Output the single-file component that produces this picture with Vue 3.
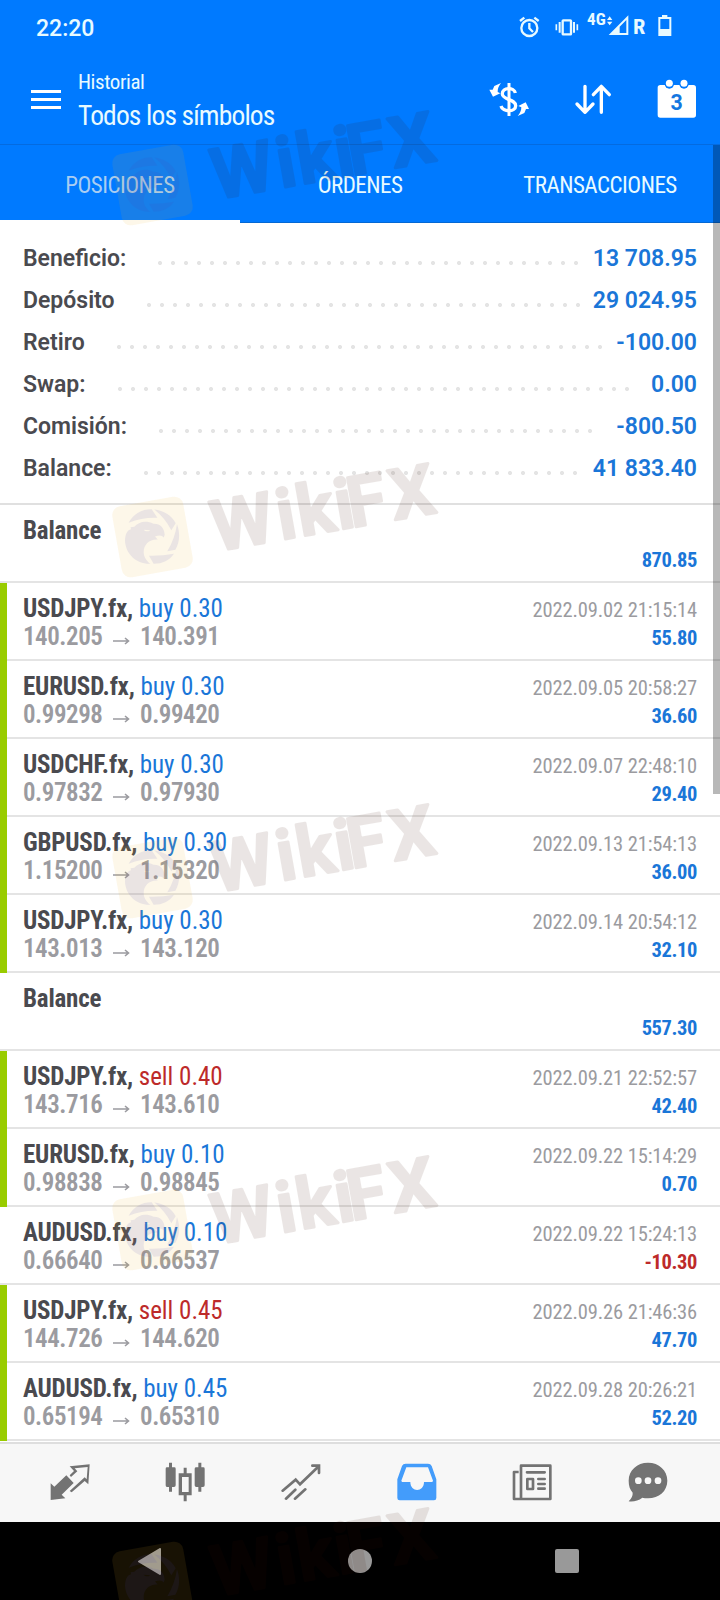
<template>
  <div class="screen">
    <header class="top">
      <div class="status-bar">
        <span class="time">22:20</span>
        <svg class="status-icons" viewBox="470 30 480 90" fill="none" stroke="#e8faff">
          <circle cx="507" cy="84" r="24" stroke-width="7" />
          <path d="M507 69v16l11 11M479 63l13-10M535 63l-13-10" stroke-width="7" />
          <rect x="607" y="61" width="25" height="42" rx="2" stroke-width="7" />
          <path d="M598 66v32M641 66v32" stroke-width="6" />
          <path d="M588 73v18M651 73v18" stroke-width="5" />
          <path d="M740 60l8-11 8 11zM740 65l8 11 8-11z" fill="#e8faff" stroke="none" />
          <path d="M745 105l59-59v59zM778 80v19h20V60z" fill="#e8faff" fill-rule="evenodd" stroke="none" />
          <path d="M905 45h16v6h12v57h-39V51h11zM900 57v30h27V57z" fill="#e8faff" fill-rule="evenodd" stroke="none" />
          <text x="680" y="76" font-size="52" textLength="56" lengthAdjust="spacingAndGlyphs">4G</text>
          <text x="818" y="102" font-size="61" textLength="37" lengthAdjust="spacingAndGlyphs">R</text>
        </svg>
      </div>
      <div class="toolbar">
        <svg class="menu" viewBox="0 0 30 20" fill="#fff">
          <path d="M0 0h30v3H0zM0 8h30v3H0zM0 16h30v3H0z" />
        </svg>
        <div class="titles">
          <div class="subtitle">Historial</div>
          <div class="title">Todos los símbolos</div>
        </div>
        <div class="actions">
          <svg viewBox="388 237 120 120" fill="none" stroke="#fff">
            <path d="M467 279c-3-18-40-18-39 3 1 19 40 15 40 35 0 20-39 20-44 1" stroke-width="10" />
            <path d="M448 249v99" stroke-width="9" />
            <path d="M424 249l-20 9-5 11-10 0 11 21 22-10-8-4c0-11 3-18 10-27z" fill="#fff" stroke="none" />
            <path d="M474 348l20-9 5-12 9 0-10-20-22 11 9 4c0 10-4 18-11 26z" fill="#fff" stroke="none" />
          </svg>
          <svg viewBox="640 237 120 120" fill="none" stroke="#fff" stroke-width="10" stroke-linecap="round" stroke-linejoin="round">
            <path d="M676 259v78M652 312l24 25 24-25M725 337v-78M701 284l24-25 24 25" />
          </svg>
          <svg viewBox="891 237 120 120">
            <rect x="893" y="255" width="115" height="98" rx="8" fill="#fff" />
            <circle cx="928" cy="252" r="14" fill="#007aff" />
            <circle cx="972" cy="252" r="14" fill="#007aff" />
            <circle cx="928" cy="250" r="10.500" fill="#fff" />
            <circle cx="972" cy="250" r="10.500" fill="#fff" />
            <text class="day" x="950" y="331" text-anchor="middle">3</text>
          </svg>
        </div>
      </div>
      <nav class="tabs">
        <div v-for="(tab, i) in tabs" :key="tab" class="tab" :class="{ active: i === 0 }">
          <span>{{ tab }}</span>
        </div>
      </nav>
    </header>

    <section class="summary">
      <div v-for="item in summary" :key="item.label" class="summary-row">
        <span class="summary-label">{{ item.label }}</span>
        <span class="dots" :style="{ width: item.dots * 13 + 'px' }"></span>
        <span class="summary-value">{{ item.value }}</span>
      </div>
    </section>

    <section class="deals">
      <div v-for="(deal, i) in deals" :key="i" class="deal" :class="{ win: deal.symbol && deal.profit > 0 }">
        <div class="line">
          <span v-if="deal.symbol" class="name"><b>{{ deal.symbol }},</b> <span :class="deal.side">{{ deal.side }} {{ deal.volume }}</span></span>
          <span v-else class="name"><b>Balance</b></span>
          <span class="date">{{ deal.date }}</span>
        </div>
        <div class="line">
          <span class="price">
            <template v-if="deal.symbol">
              {{ deal.open }}
              <svg class="arrow" viewBox="0 0 17 8"><path d="M0 4h15.500M12 1l3.500 3-3.500 3" fill="none" stroke="#9b9ba0" stroke-width="1.600" /></svg>
              {{ deal.close }}
            </template>
          </span>
          <span class="amount" :class="{ negative: deal.profit < 0 }">{{ deal.profit }}</span>
        </div>
      </div>
    </section>

    <nav class="bottom-nav">
      <svg viewBox="151 94 120 120" fill="#737373">
        <path d="M153 158l11 10 36-34 22 23-36 35 11 11-44 5z" />
        <path d="M210 107l60-6-4 60-11-10-39 34-6-4 45-41 6 6 3-37-39 4 8 9-19 17-4-5 13-13z" />
      </svg>
      <svg viewBox="496 94 120 120" fill="#737373">
        <path d="M508 96h9v14h7q4 0 4 4v50q0 5-5 5h-6v14h-9v-14h-6q-4 0-4-5v-50q0-4 4-4h6z" />
        <path d="M596 96h9v14h6q4 0 4 4v50q0 5-5 5h-5v14h-9v-14h-6q-5 0-5-5v-50q0-4 5-4h6z" />
        <path d="M552 111h9v17h15v66h-15v18h-9v-18h-15v-66h15zM547 139v45h20v-45z" fill-rule="evenodd" />
      </svg>
      <svg viewBox="842 94 120 120" fill="none" stroke="#737373" stroke-width="8" stroke-linecap="round">
        <path d="M847 180l39-33 13 14 57-55M936 105h20v22M857 204l28-27M884 204l31-28" />
      </svg>
      <svg viewBox="110 94 120 120" fill="#439cfb">
        <path d="M136 99h67q8 0 11 7l14 40v56q0 7-7 7H118q-7 0-7-7v-56l14-40q3-7 11-7zM138 110l-15 40 2 4h25c0 32 41 32 41 0h25l2-4-15-40z" fill-rule="evenodd" />
      </svg>
      <svg viewBox="457 94 120 120" fill="none" stroke="#737373" stroke-width="8" stroke-linejoin="round">
        <path d="M484 205V105h88v100H463v-81h14" />
        <path d="M502 125h53M536 145h19M536 160h19M536 174h19" stroke-linecap="round" />
        <rect x="503" y="145" width="17" height="30" />
      </svg>
      <svg viewBox="805 94 120 120">
        <path d="M865 96c33 0 58 23 58 54s-25 53-58 53q-10 0-17-2c-12 9-26 13-41 11q13-13 12-26c-8-9-12-20-12-36 0-31 25-54 58-54z" fill="#737373" />
        <circle cx="836" cy="150" r="10" fill="#f7f7f7" />
        <circle cx="865" cy="150" r="10" fill="#f7f7f7" />
        <circle cx="895" cy="150" r="10" fill="#f7f7f7" />
      </svg>
    </nav>

    <div class="system-nav">
      <svg class="back" viewBox="0 0 23 27"><path d="M22 1v25L1 13.500z" fill="#999" stroke="#999" stroke-width="2" stroke-linejoin="round" /></svg>
      <span class="home"></span>
      <span class="recents"></span>
    </div>

    <div class="scrollbar"></div>

    <svg v-for="top in marks" :key="top" class="mark" :style="{ top: top + 'px' }" viewBox="0 0 340 130">
      <g opacity="0.1" transform="translate(45.500 80) rotate(-10)">
        <rect x="-36" y="-36" width="72" height="72" rx="9" fill="#ebb428" />
      </g>
      <g opacity="0.1" transform="translate(-7 33.500) scale(0.3333)" fill="#4943b7">
        <path d="M86 97c14-27 38-41 69-41l17 26q-44-2-86 15z" />
        <path d="M163 57c28 3 51 17 64 41l-13 21q-20-38-51-62z" />
        <path d="M231 101c10 28 8 54-5 77l-24 4q23-38 29-81z" />
        <path d="M222 190c-14 20-34 30-61 30l-14-24q40 1 75-6z" />
        <path d="M75 151c1-24 8-32 18-35l-1-6 11-1c12-14 34-21 57-9 21-1 33 13 34 33l-3 8c-4-7-14-8-26-3l8 9c-24-2-42 14-42 38 0 13 8 25 20 35-40 2-74-28-76-69zM131 118c6 6 13 6 20 1z" fill-rule="evenodd" />
      </g>
      <g opacity="0.1" transform="translate(108 94.500) rotate(-10)" fill="#3c0f00" stroke="#3c0f00" stroke-width="3" stroke-linejoin="round">
        <text class="mark-text" x="1 67 87.500 126 138.500 182" y="0">WikiFX</text>
      </g>
    </svg>
  </div>
</template>

<script setup>
const tabs = ['POSICIONES', 'ÓRDENES', 'TRANSACCIONES']

const summary = [
  { label: 'Beneficio:', value: '13 708.95', dots: 33 },
  { label: 'Depósito', value: '29 024.95', dots: 34 },
  { label: 'Retiro', value: '-100.00', dots: 38 },
  { label: 'Swap:', value: '0.00', dots: 40 },
  { label: 'Comisión:', value: '-800.50', dots: 34 },
  { label: 'Balance:', value: '41 833.40', dots: 34 }
]

const deals = [
  { profit: '870.85' },
  { symbol: 'USDJPY.fx', side: 'buy', volume: '0.30', open: '140.205', close: '140.391', date: '2022.09.02 21:15:14', profit: '55.80' },
  { symbol: 'EURUSD.fx', side: 'buy', volume: '0.30', open: '0.99298', close: '0.99420', date: '2022.09.05 20:58:27', profit: '36.60' },
  { symbol: 'USDCHF.fx', side: 'buy', volume: '0.30', open: '0.97832', close: '0.97930', date: '2022.09.07 22:48:10', profit: '29.40' },
  { symbol: 'GBPUSD.fx', side: 'buy', volume: '0.30', open: '1.15200', close: '1.15320', date: '2022.09.13 21:54:13', profit: '36.00' },
  { symbol: 'USDJPY.fx', side: 'buy', volume: '0.30', open: '143.013', close: '143.120', date: '2022.09.14 20:54:12', profit: '32.10' },
  { profit: '557.30' },
  { symbol: 'USDJPY.fx', side: 'sell', volume: '0.40', open: '143.716', close: '143.610', date: '2022.09.21 22:52:57', profit: '42.40' },
  { symbol: 'EURUSD.fx', side: 'buy', volume: '0.10', open: '0.98838', close: '0.98845', date: '2022.09.22 15:14:29', profit: '0.70' },
  { symbol: 'AUDUSD.fx', side: 'buy', volume: '0.10', open: '0.66640', close: '0.66537', date: '2022.09.22 15:24:13', profit: '-10.30' },
  { symbol: 'USDJPY.fx', side: 'sell', volume: '0.45', open: '144.726', close: '144.620', date: '2022.09.26 21:46:36', profit: '47.70' },
  { symbol: 'AUDUSD.fx', side: 'buy', volume: '0.45', open: '0.65194', close: '0.65310', date: '2022.09.28 20:26:21', profit: '52.20' }
]

// top edge of every watermark
const marks = [105, 456.5, 797.5, 1149.5, 1502]
</script>

<style>
body {
  margin: 0;
}
</style>

<style scoped>
.screen {
  position: relative;
  width: 720px;
  height: 1600px;
  overflow: hidden;
  background: #fff;
  font-family: Roboto, sans-serif;
  font-stretch: 75%;
  color: #4a4a4f;
}
.top {
  height: 223px;
  background: #007aff;
  color: #e8faff;
}
.status-bar {
  display: flex;
  height: 56px;
  padding-left: 36px;
}
.time {
  font-size: 23px;
  font-weight: 500;
  font-stretch: 100%;
  line-height: 57px;
}
.status-icons {
  width: 160px;
  height: 30px;
  margin: 10px 43px 0 auto;
}
.status-icons text {
  fill: #e8faff;
  stroke: none;
  font-weight: 700;
}
.toolbar {
  display: flex;
  height: 88px;
  border-bottom: 1px solid #046be0;
  padding: 0 23px 0 31px;
}
.menu {
  width: 30px;
  height: 20px;
  margin-top: 34px;
}
.titles {
  margin-left: 17px;
  padding-top: 12px;
  white-space: nowrap;
}
.subtitle {
  font-size: 21px;
  line-height: 28px;
  letter-spacing: -0.4px;
}
.title {
  font-size: 27.500px;
  line-height: 39px;
  letter-spacing: -0.85px;
}
.subtitle,
.title,
.tab {
  font-weight: 430;
}
.actions {
  display: flex;
  gap: 44px;
  margin-left: auto;
  padding-top: 23px;
}
.actions svg {
  width: 40px;
  height: 40px;
}
.day {
  font-size: 64px;
  font-weight: 700;
  font-stretch: 100%;
  fill: #1476e0;
}
.tabs {
  display: grid;
  grid-template-columns: repeat(3, 1fr);
}
.tab {
  height: 78px;
  box-sizing: border-box;
  text-align: center;
  font-size: 23px;
  letter-spacing: -0.5px;
  line-height: 81px;
  border-bottom: 1px solid #0468d4;
}
.tab.active {
  color: #a9cdf2;
  border-bottom: 3px solid #fff;
}
.summary {
  box-sizing: border-box;
  height: 282px;
  padding: 14px 23px 0;
  border-bottom: 2px solid #e0e0e0;
  font-stretch: 100%;
  font-size: 23px;
  font-weight: 600;
}
.summary-row {
  display: flex;
  align-items: center;
  height: 42px;
}
.dots {
  height: 4px;
  margin: 10px 0 0 32px;
  background: radial-gradient(circle at 2px 2px, #e4e4e4 1.800px, transparent 2.300px) 0 0 / 13px 4px;
}
.summary-value {
  margin-left: auto;
  color: #1a76d8;
}
.deal {
  box-sizing: border-box;
  height: 78px;
  padding: 12px 23px 0 16px;
  border-left: 7px solid transparent;
  background: linear-gradient(#e4e4e4, #e4e4e4) 0 100% / 100% 2px no-repeat border-box;
}
.deal.win {
  border-left-color: #99cc00;
}
.line {
  display: flex;
  height: 28px;
  align-items: baseline;
  justify-content: space-between;
  line-height: 28px;
  white-space: nowrap;
}
.name,
.price {
  font-size: 25px;
}
.name {
  font-weight: 430;
}
.name b {
  font-weight: 700;
  letter-spacing: -0.2px;
}
.price {
  color: #9b9ba0;
  font-weight: 600;
  letter-spacing: -0.45px;
}
.arrow {
  width: 17px;
  height: 8px;
  margin: 0 5px;
}
.buy {
  color: #1a76d8;
}
.sell {
  color: #bd2a2a;
}
.date {
  font-size: 20.500px;
  letter-spacing: -0.12px;
  color: #9b9ba0;
}
.amount {
  font-size: 20.500px;
  font-weight: 700;
  letter-spacing: -0.4px;
  line-height: 30px;
  color: #1a76d8;
}
.amount.negative {
  color: #bd2a2a;
}
.bottom-nav {
  display: grid;
  grid-template-columns: repeat(6, 1fr);
  justify-items: center;
  box-sizing: border-box;
  height: 80px;
  margin-top: 1px;
  padding: 18px 14px 0 12px;
  border-top: 2px solid #dedede;
  background: #f7f7f7;
}
.bottom-nav svg {
  width: 40px;
  height: 40px;
}
.system-nav {
  display: flex;
  align-items: center;
  justify-content: space-between;
  box-sizing: border-box;
  height: 78px;
  padding: 0 141px 0 138px;
  background: #000;
}
.back {
  width: 23px;
  height: 27px;
}
.home {
  width: 24px;
  height: 24px;
  margin-left: 4px;
  border-radius: 50%;
  background: #999;
}
.recents {
  width: 24px;
  height: 24px;
  border-radius: 2px;
  background: #999;
}
.scrollbar {
  position: absolute;
  top: 145px;
  right: 0;
  width: 7px;
  height: 649px;
  background: rgba(0, 0, 0, 0.28);
}
.mark {
  position: absolute;
  left: 107px;
  width: 340px;
  height: 130px;
  overflow: visible;
  pointer-events: none;
}
.mark-text {
  font-size: 70px;
  font-weight: 600;
  font-stretch: 100%;
}
</style>
